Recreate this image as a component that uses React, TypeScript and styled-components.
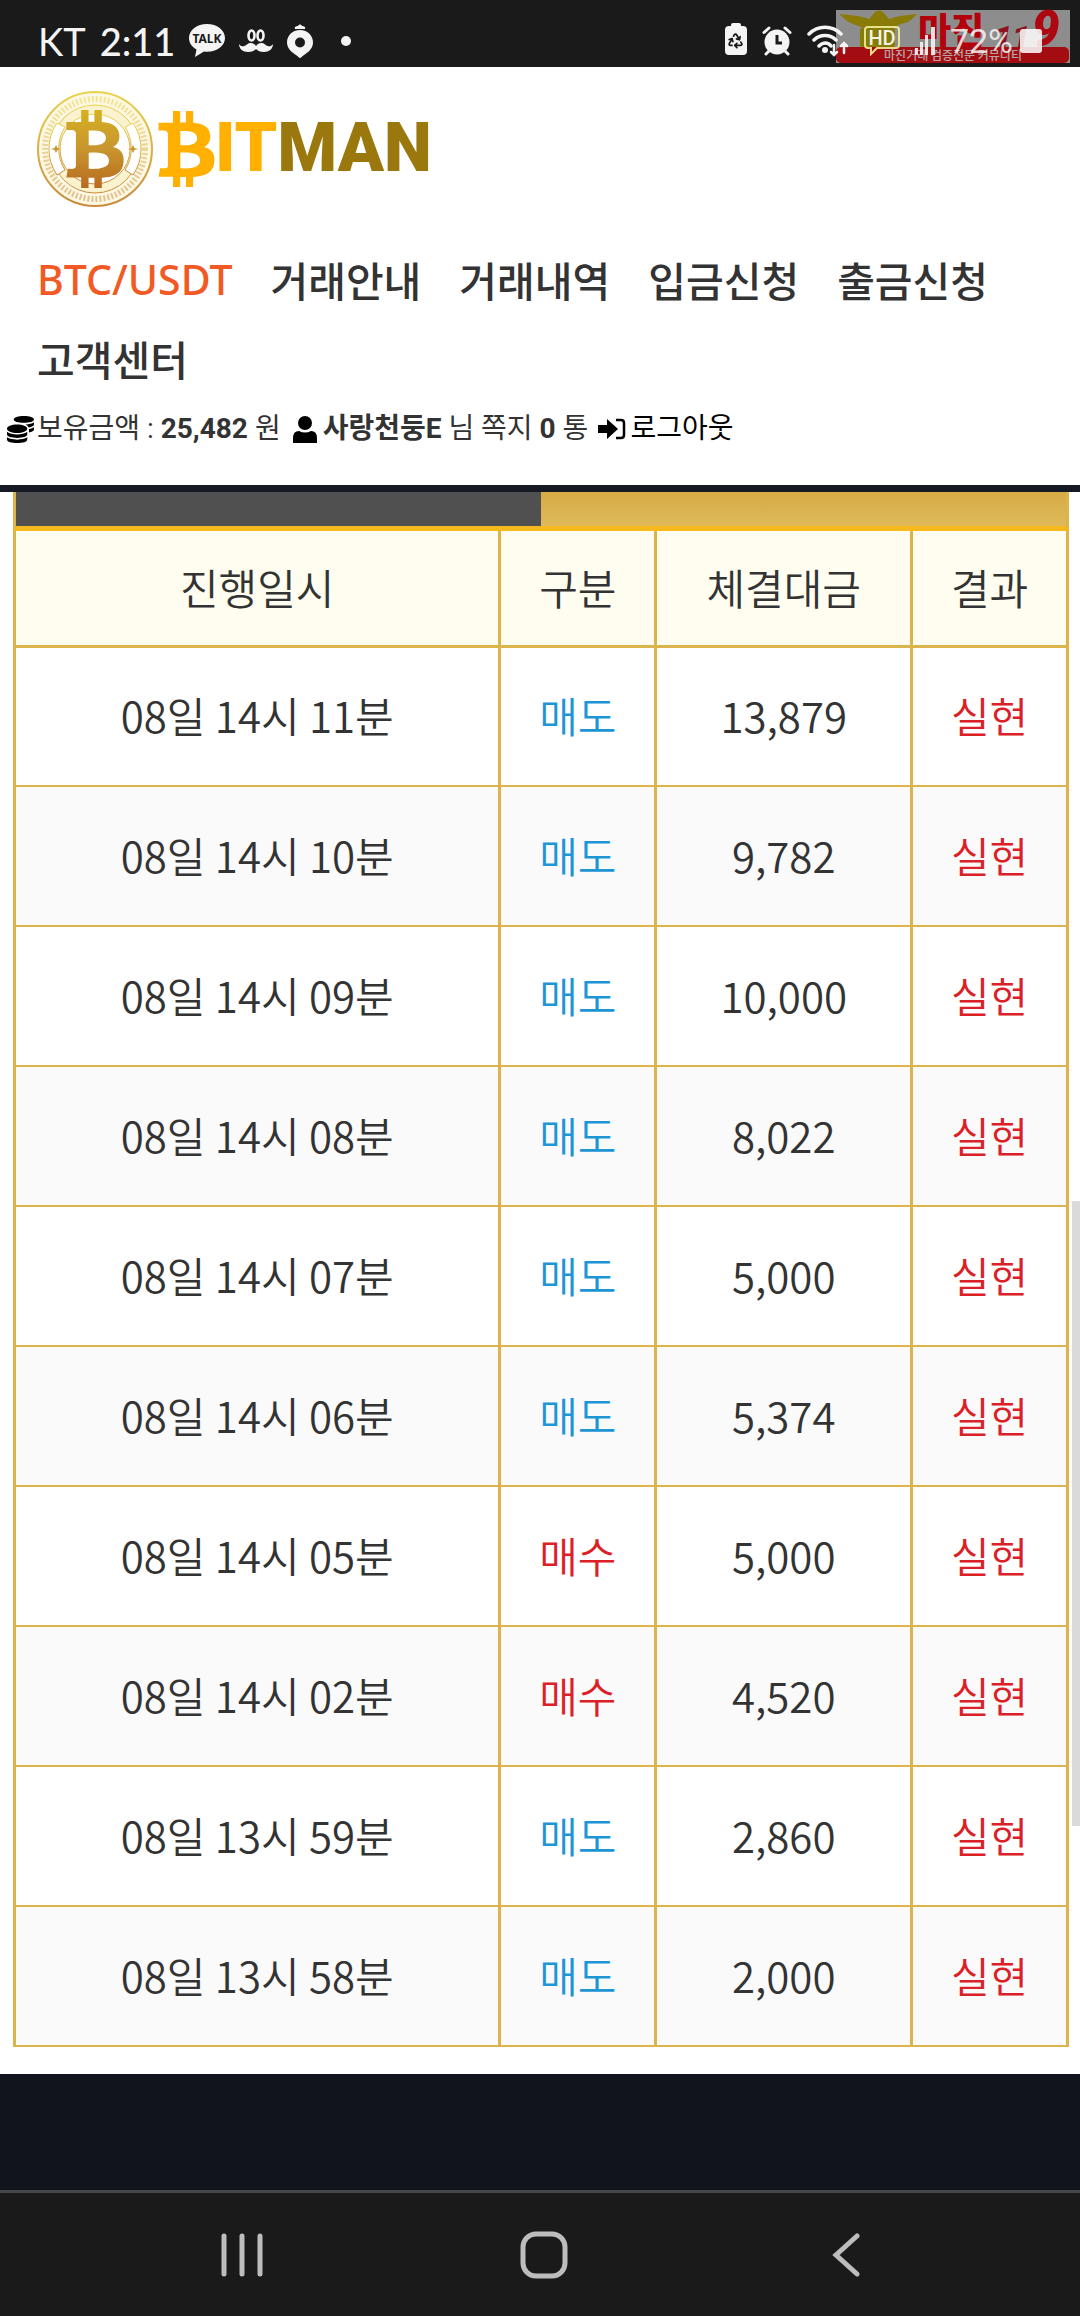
import React from 'react';
import styled, { createGlobalStyle } from 'styled-components';
import { FaBtc, FaCoins } from 'react-icons/fa';
import { Recycle } from 'lucide-react';

const GlobalStyle = createGlobalStyle`
  * { box-sizing: border-box; }
  body {
    margin: 0;
    background: #11141b;
    color: #333;
    font-family: Roboto, 'Noto Sans CJK KR', sans-serif;
  }
  #root { min-height: 100vh; display: flex; flex-direction: column; }
`;

const Screen = styled.div`
  position: relative;
  flex: 1;
  display: flex;
  flex-direction: column;
`;

const StatusBar = styled.div`
  position: relative;
  height: 67px;
  padding: 14px 38px 0;
  background: #1a1a1a;
  color: #f4f4f4;
  display: flex;
  align-items: center;
  justify-content: space-between;
`;

const StatusGroup = styled.div<{ $gap: number }>`
  position: relative;
  z-index: 1;
  display: flex;
  align-items: center;
  gap: ${(p) => p.$gap}px;
`;

const Clock = styled.span`
  font: 500 38px/50px Lato, sans-serif;
  white-space: pre;
`;

const Carrier = styled.span`
  font: 400 38px/50px Lato, sans-serif;
`;

const Dot = styled.span`
  width: 10px;
  height: 10px;
  margin-left: 14px;
  border-radius: 50%;
  background: #f4f4f4;
`;

const BatteryLevel = styled.span`
  font: 400 34px/50px Roboto, sans-serif;
  opacity: 0.85;
`;

const BatteryIcon = styled.span`
  width: 22px;
  height: 24px;
  margin-left: -8px;
  border-radius: 3px;
  background: #fff;
  opacity: 0.85;
`;

const SaverIcon = styled.span`
  position: relative;
  display: grid;
  place-items: center;
  width: 22px;
  height: 29px;
  border-radius: 4px;
  background: #f4f4f4;
  color: #1a1a1a;
  &::before {
    content: '';
    position: absolute;
    top: -3px;
    left: 6px;
    width: 10px;
    height: 4px;
    border-radius: 2px 2px 0 0;
    background: #f4f4f4;
  }
`;

const Watermark = styled.div`
  position: absolute;
  right: 10px;
  top: 10px;
  width: 234px;
  height: 53px;
  svg { overflow: visible; }
`;

const Header = styled.header`
  background: #fff;
  border-bottom: 7px solid #161a24;
  padding: 23px 0 27px;
`;

const Brand = styled.a`
  display: flex;
  align-items: center;
  margin: 0 37px;
  text-decoration: none;
  font: 900 68px/117px Roboto, sans-serif;
  color: #ffb000;
`;

const BrandMark = styled(FaBtc)`
  width: 57px;
  height: 76px;
  margin-left: 4px;
`;

const BrandEnd = styled.span`
  color: #9a780d;
`;

const Menu = styled.nav`
  display: flex;
  flex-wrap: wrap;
  column-gap: 38px;
  margin: 33px 37px 0;
`;

const MenuLink = styled.a<{ $active?: boolean }>`
  font: 500 41px/79px ${(p) => (p.$active ? "'Noto Sans'" : "'Noto Sans CJK KR'")}, sans-serif;
  color: ${(p) => (p.$active ? '#f15a24' : '#333')};
  text-decoration: none;
`;

const Account = styled.div`
  display: flex;
  align-items: center;
  gap: 3px;
  margin-top: 2px;
  padding-left: 7px;
  font-size: 28px;
  line-height: 58px;
  white-space: pre;
  svg { flex: none; color: #000; }
`;

const UserIcon = styled.svg`
  margin: 0 3px 0 9px;
`;

const Logout = styled.a`
  display: flex;
  align-items: center;
  gap: 4px;
  margin-left: 7px;
  color: #000;
  text-decoration: none;
`;

const Content = styled.main`
  background: #fff;
  padding: 0 11px 27px 13px;
`;

const TabStrip = styled.div`
  display: flex;
  height: 39px;
  border: solid #dcb44c;
  border-width: 0 3px;
  border-bottom: 5px solid #f5b81d;
`;

const Tab = styled.div<{ $active?: boolean }>`
  flex: 1;
  background: ${(p) => (p.$active ? '#505050' : 'linear-gradient(#d6ab45, #dfb95a)')};
`;

const Trades = styled.table`
  width: 100%;
  table-layout: fixed;
  border-collapse: collapse;
  font: 400 42px/60px 'Noto Sans CJK KR', sans-serif;
`;

const Col = styled.col<{ $width: string }>`
  width: ${(p) => p.$width};
`;

const HeadCell = styled.th`
  height: 115px;
  padding: 0 0 2px;
  border: 3px solid #dcb44c;
  border-top: 0;
  background: #fffdf0;
  font-weight: 350;
`;

const Row = styled.tr`
  &:nth-child(even) { background: #fafafa; }
`;

const Cell = styled.td<{ $color?: string }>`
  height: 140px;
  padding: 0 0 3px;
  border: solid #dcb44c;
  border-width: 2px 3px;
  text-align: center;
  font-weight: 350;
  color: ${(p) => p.$color ?? '#333'};
`;

const Scrollbar = styled.div`
  position: absolute;
  right: 0;
  top: 1201px;
  width: 8px;
  height: 625px;
  background: #dadada;
`;

const Footer = styled.footer`
  flex: 1;
  min-height: 115px;
`;

const SystemNav = styled.div`
  height: 126px;
  padding-left: 7px;
  border-top: 3px solid #45474b;
  background: #1a1a1a;
  display: flex;
  justify-content: center;
  gap: 254px;
`;

const NavButton = styled.button`
  width: 48px;
  padding: 0;
  border: 0;
  background: none;
  color: #bdbdbd;
  display: grid;
  place-items: center;
`;

const BLUE = '#1e96d6';
const RED = '#dc2027';

const trades: [string, '매도' | '매수', string][] = [
  ['08일 14시 11분', '매도', '13,879'],
  ['08일 14시 10분', '매도', '9,782'],
  ['08일 14시 09분', '매도', '10,000'],
  ['08일 14시 08분', '매도', '8,022'],
  ['08일 14시 07분', '매도', '5,000'],
  ['08일 14시 06분', '매도', '5,374'],
  ['08일 14시 05분', '매수', '5,000'],
  ['08일 14시 02분', '매수', '4,520'],
  ['08일 13시 59분', '매도', '2,860'],
  ['08일 13시 58분', '매도', '2,000'],
];

const menu = ['거래안내', '거래내역', '입금신청', '출금신청', '고객센터'];

const TalkIcon = () => (
  <svg width="36" height="34" viewBox="0 0 36 34">
    <path d="M18 0C8 0 0 6 0 14c0 5 3 9 7.500 11.500L6 33l9-5.500c1 .2 2 .3 3 .3 10 0 18-6 18-13.800S28 0 18 0Z" fill="#f4f4f4" />
    <text x="18" y="19" textAnchor="middle" fontFamily="Noto Sans, sans-serif" fontWeight="700" fontSize="12" fill="#1a1a1a">TALK</text>
  </svg>
);

const MoustacheIcon = () => (
  <svg width="34" height="24" viewBox="0 0 34 24" fill="none">
    <ellipse cx="12.500" cy="6.500" rx="3" ry="5" stroke="#f4f4f4" strokeWidth="2.600" />
    <ellipse cx="21.500" cy="6.500" rx="3" ry="5" stroke="#f4f4f4" strokeWidth="2.600" />
    <path d="M17 17c-2-3-6-4-9-1.500C5 18 2 18 0 15c0 5 4 8 9 8 4 0 6-1 8-3 2 2 4 3 8 3 5 0 9-3 9-8-2 3-5 3-8 .5C23 13 19 14 17 17Z" fill="#f4f4f4" />
  </svg>
);

const MedalIcon = () => (
  <svg width="26" height="34" viewBox="0 0 26 34">
    <path d="M8 5c-1-2 1-3 3-3 1-2 3-2 4 0 2 0 4 1 3 3Z" fill="#f4f4f4" />
    <path d="M13 6C5 6 0 12 0 18.500 0 25 6 29 9 31c2 1 3 3 4 3s2-2 4-3c3-2 9-6 9-12.500C26 12 21 6 13 6Z" fill="#f4f4f4" />
    <circle cx="13" cy="18.500" r="5" fill="#1a1a1a" />
  </svg>
);

const AlarmIcon = () => (
  <svg width="30" height="30" viewBox="0 0 30 30" fill="none" stroke="#f4f4f4" strokeWidth="3" strokeLinecap="round">
    <path d="M2 6.500 7 2M28 6.500 23 2M7 25l-3 3M23 25l3 3" />
    <circle cx="15" cy="16" r="12.500" fill="#f4f4f4" stroke="none" />
    <path d="M15 9v8h5" stroke="#1a1a1a" strokeLinecap="butt" />
  </svg>
);

const WifiIcon = () => (
  <svg width="42" height="32" viewBox="0 0 42 32" fill="none" stroke="#f4f4f4" strokeWidth="3.500" strokeLinecap="round">
    <path d="M2 9C11 0 25 0 34 9M7 15c6-6 16-6 22 0M12 21c4-4 9-4 12 0" />
    <circle cx="18" cy="25" r="3" fill="#f4f4f4" stroke="none" />
    <path d="M27 20v10m-3-3 3 3 3-3M37 28V18m-3 3 3-3 3 3" strokeWidth="2.500" />
  </svg>
);

const HdIcon = () => (
  <svg width="36" height="30" viewBox="0 0 36 30" fill="none" opacity="0.9">
    <path d="M4 1h28q3 0 3 3v15q0 3-3 3H13l-6 6v-6H4q-3 0-3-3V4q0-3 3-3Z" stroke="#f2ef9a" strokeWidth="2" />
    <text x="18" y="19" textAnchor="middle" fontFamily="Roboto, sans-serif" fontWeight="500" fontSize="20" fill="#fff">HD</text>
  </svg>
);

const SignalIcon = () => (
  <svg width="20" height="28" viewBox="0 0 20 28" fill="#f4f4f4" opacity="0.9">
    <path d="M0 21h3v7H0zM5 15h3v13H5zM10 8h3v20h-3zM16 0h4v28h-4z" />
  </svg>
);

const WatermarkArt = () => (
  <svg width="234" height="53" viewBox="0 0 234 53">
    <rect width="234" height="53" fill="#8d8d8d" />
    <path d="M3 4c12 1 22 2 30 5l6-7q4-3 8 0l6 7c8-3 18-4 28-5l-5 5-4 3-7 2-6 3-10 0-4 5h-6l-4-5H25l-8-3-6-3Z" fill="#8a7a08" />
    <rect x="24" y="17" width="35" height="21" rx="4" fill="#877c08" />
    <text x="82" y="34" fontFamily="Noto Sans CJK KR, sans-serif" fontWeight="900" fontSize="36" fill="#b3000c">마진</text>
    <text x="158" y="38" fontFamily="Roboto, sans-serif" fontWeight="900" fontStyle="italic" fontSize="32" fill="#8a1420">11</text>
    <text x="196" y="36" fontFamily="Roboto, sans-serif" fontWeight="900" fontStyle="italic" fontSize="49" fill="#ad0712">9</text>
    <rect y="37" width="233" height="16" rx="5" fill="#a30d12" />
    <text x="117" y="50" textAnchor="middle" fontFamily="Noto Sans CJK KR, sans-serif" fontWeight="500" fontSize="12" fill="#b9a5a5">마진거래 검증전문 커뮤니티</text>
  </svg>
);

const Coin = () => (
  <svg width="117" height="117" viewBox="0 0 117 117" fill="none">
    <defs>
      <linearGradient id="gold" x1="0" y1="0" x2="0" y2="1">
        <stop offset="0" stopColor="#e8d44a" />
        <stop offset="0.5" stopColor="#d9b04a" />
        <stop offset="1" stopColor="#c98a3c" />
      </linearGradient>
      <linearGradient id="letter" x1="0" y1="0" x2="0" y2="1">
        <stop offset="0" stopColor="#d6b022" />
        <stop offset="0.5" stopColor="#c8962e" />
        <stop offset="1" stopColor="#b86a1e" />
      </linearGradient>
    </defs>
    <circle cx="58" cy="59" r="57" fill="#fdf8e3" stroke="url(#gold)" strokeWidth="2" />
    <circle cx="58" cy="59" r="50" stroke="url(#gold)" strokeWidth="6" strokeDasharray="2 2" opacity="0.5" />
    <circle cx="58" cy="59" r="44" fill="#fbf3d0" stroke="url(#gold)" strokeWidth="1" />
    <circle cx="58" cy="59" r="35" fill="#fff" stroke="url(#gold)" strokeWidth="1" />
    <path d="M28 37 20 33a46 46 0 0 0 0 52l8-5a40 40 0 0 1 0-43ZM88 37l8-4a46 46 0 0 1 0 52l-8-5a40 40 0 0 0 0-43Z" fill="#fff" stroke="url(#gold)" strokeWidth="1" />
    <path d="m19 55 1.500 3L24 59l-3.500 1L19 63l-1.500-3L14 59l3.500-1ZM96 55l1.500 3 3.500 1-3.500 1L96 63l-1.500-3-3.500-1 3.500-1Z" fill="#c79a35" />
    <FaBtc x="19" y="20" size={78} fill="url(#letter)" />
  </svg>
);

export default function App() {
  return (
    <>
      <GlobalStyle />
      <Screen>
        <StatusBar>
          <StatusGroup $gap={14}>
            <Carrier>KT</Carrier>
            <Clock>2:11</Clock>
            <TalkIcon />
            <MoustacheIcon />
            <MedalIcon />
            <Dot />
          </StatusGroup>
          <StatusGroup $gap={15}>
            <SaverIcon><Recycle size={17} strokeWidth={2.5} /></SaverIcon>
            <AlarmIcon />
            <WifiIcon />
            <HdIcon />
            <SignalIcon />
            <BatteryLevel>72%</BatteryLevel>
            <BatteryIcon />
          </StatusGroup>
          <Watermark><WatermarkArt /></Watermark>
        </StatusBar>

        <Header>
          <Brand href="#">
            <Coin />
            <BrandMark />
            IT<BrandEnd>MAN</BrandEnd>
          </Brand>
          <Menu>
            <MenuLink href="#" $active>BTC/USDT</MenuLink>
            {menu.map((label) => (
              <MenuLink href="#" key={label}>{label}</MenuLink>
            ))}
          </Menu>
          <Account>
            <FaCoins size={27} />
            <span>보유금액 : <b>25,482</b> 원</span>
            <UserIcon width="24" height="27" viewBox="0 0 24 27" fill="currentColor">
              <circle cx="12" cy="7" r="7" />
              <path d="M0 27v-5q0-7 6-7 6 3 12 0 6 0 6 7v5Z" />
            </UserIcon>
            <span><b>사랑천둥E</b> 님 쪽지 <b>0</b> 통</span>
            <Logout href="#">
              <svg width="28" height="22" viewBox="0 0 28 22" fill="none">
                <path d="M0 7h9V1l11 10L9 21v-6H0Z" fill="currentColor" />
                <path d="M18 2h5q3 0 3 3v12q0 3-3 3h-5" stroke="currentColor" strokeWidth="2.500" />
              </svg>
              로그아웃
            </Logout>
          </Account>
        </Header>

        <Content>
          <TabStrip>
            <Tab $active />
            <Tab />
          </TabStrip>
          <Trades>
            <colgroup>
              <Col $width="46.1%" />
              <Col $width="14.8%" />
              <Col $width="24.3%" />
              <Col $width="14.8%" />
            </colgroup>
            <thead>
              <tr>
                <HeadCell scope="col">진행일시</HeadCell>
                <HeadCell scope="col">구분</HeadCell>
                <HeadCell scope="col">체결대금</HeadCell>
                <HeadCell scope="col">결과</HeadCell>
              </tr>
            </thead>
            <tbody>
              {trades.map(([time, side, amount]) => (
                <Row key={time}>
                  <Cell>{time}</Cell>
                  <Cell $color={side === '매도' ? BLUE : RED}>{side}</Cell>
                  <Cell>{amount}</Cell>
                  <Cell $color={RED}>실현</Cell>
                </Row>
              ))}
            </tbody>
          </Trades>
        </Content>
        <Footer />
        <SystemNav>
          <NavButton aria-label="최근 앱">
            <svg width="42" height="44" viewBox="0 0 42 44" stroke="currentColor" strokeWidth="5" strokeLinecap="round">
              <path d="M3 3v38M21 3v38M39 3v38" />
            </svg>
          </NavButton>
          <NavButton aria-label="홈">
            <svg width="48" height="48" viewBox="0 0 48 48" fill="none" stroke="currentColor" strokeWidth="5">
              <rect x="3" y="3" width="42" height="42" rx="13" />
            </svg>
          </NavButton>
          <NavButton aria-label="뒤로">
            <svg width="28" height="44" viewBox="0 0 28 44" fill="none" stroke="currentColor" strokeWidth="5" strokeLinecap="round">
              <path d="M25 3 4 22l21 19" />
            </svg>
          </NavButton>
        </SystemNav>
        <Scrollbar />
      </Screen>
    </>
  );
}
